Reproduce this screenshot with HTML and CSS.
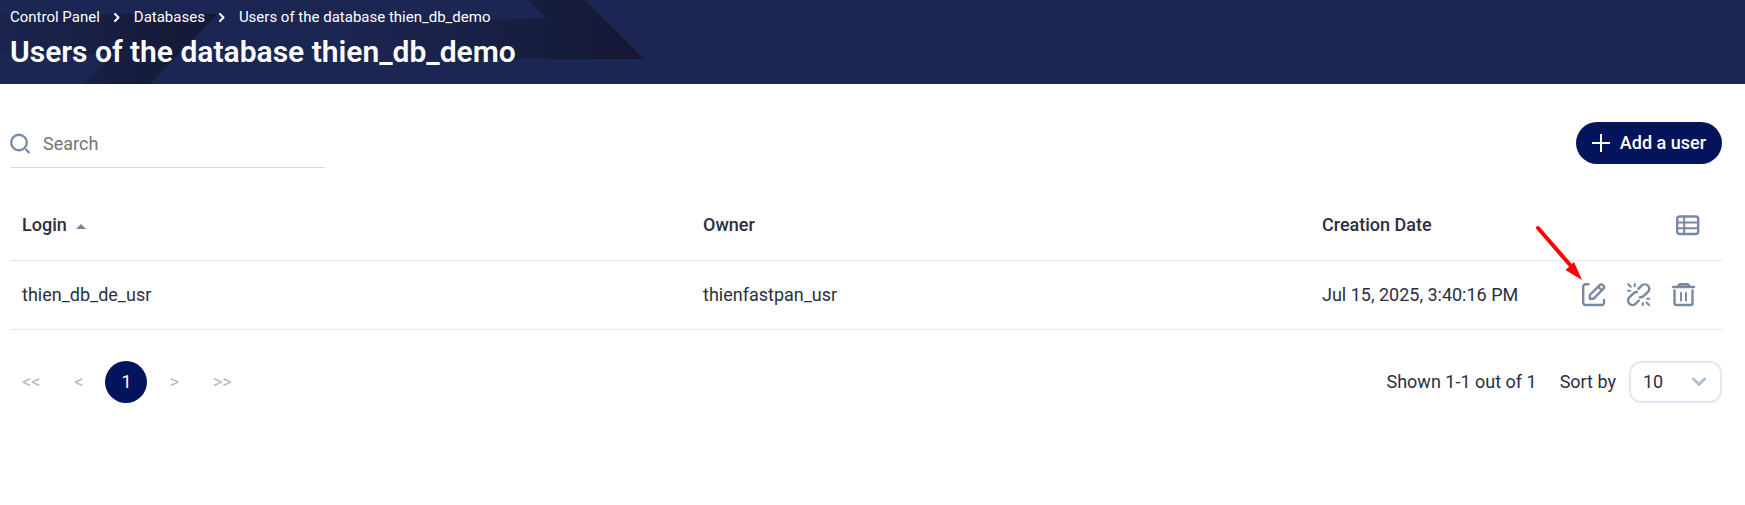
FILE: index.html
```html
<!DOCTYPE html>
<html lang="en">
<head>
<meta charset="utf-8">
<title>Users of the database thien_db_demo</title>
<link rel="stylesheet" href="styles.css">
</head>
<body>
<header class="banner">
  <svg class="banner-art" width="700" height="84" viewBox="0 0 700 84" aria-hidden="true">
    <defs>
      <linearGradient id="fade-left" x1="0" y1="0" x2="217" y2="0" gradientUnits="userSpaceOnUse">
        <stop offset="0" stop-color="#141833" stop-opacity="0.100"/>
        <stop offset="1" stop-color="#141833"/>
      </linearGradient>
      <linearGradient id="fade-right" x1="340" y1="0" x2="644" y2="0" gradientUnits="userSpaceOnUse">
        <stop offset="0" stop-color="#141833" stop-opacity="0"/>
        <stop offset="1" stop-color="#141833"/>
      </linearGradient>
    </defs>
    <path fill="url(#fade-left)" d="M0 14H217L150 84H84L114 54H0Z"/>
    <path fill="url(#fade-right)" d="M528 0H585L644 59H340V19H547Z"/>
  </svg>
  <nav class="crumbs" aria-label="Breadcrumb">
    <a href="#">Control Panel</a>
    <svg class="crumb-sep" width="6" height="9" viewBox="0 0 6 9" aria-hidden="true"><path d="M1 1L4.500 4.500L1 8"/></svg>
    <a href="#">Databases</a>
    <svg class="crumb-sep" width="6" height="9" viewBox="0 0 6 9" aria-hidden="true"><path d="M1 1L4.500 4.500L1 8"/></svg>
    <span>Users of the database thien_db_demo</span>
  </nav>
  <h1 class="title">Users of the database thien_db_demo</h1>
</header>

<main class="content">
  <div class="toolbar">
    <label class="search">
      <svg width="21" height="21" viewBox="0 0 21 21" aria-hidden="true"><circle cx="9" cy="9.500" r="7.800"/><path d="M16 16.500L18.800 19.300"/></svg>
      <input type="search" placeholder="Search" aria-label="Search">
    </label>
    <button class="add" type="button">
      <svg width="18" height="18" viewBox="0 0 18 18" aria-hidden="true"><path d="M9 0V18M0 9H18"/></svg>
      Add a user
    </button>
  </div>

  <table class="users">
    <thead>
      <tr>
        <th class="col-login" scope="col">Login <svg class="sort" width="10" height="5" viewBox="0 0 10 5" aria-hidden="true"><path d="M5 0L10 5H0Z"/></svg></th>
        <th class="col-owner" scope="col">Owner</th>
        <th class="col-date" scope="col">Creation Date</th>
        <th class="col-actions">
          <div class="actions">
            <button class="icon" type="button" aria-label="Choose columns">
              <svg width="24" height="24" viewBox="0 0 24 24"><rect x="1.200" y="3.500" width="21" height="17.500" rx="2.500"/><path class="thin" d="M1.200 9.500H22M1.200 15.200H22M8.200 3.500V21"/></svg>
            </button>
          </div>
        </th>
      </tr>
    </thead>
    <tbody>
      <tr>
        <td>thien_db_de_usr</td>
        <td>thienfastpan_usr</td>
        <td>Jul 15, 2025, 3:40:16 PM</td>
        <td class="col-actions">
          <div class="actions">
            <button class="icon" type="button" aria-label="Edit">
              <svg width="24" height="24" viewBox="0 0 24 24"><path d="M6.500 1.200H3.700A2.500 2.500 0 0 0 1.200 3.700V19.800A2.200 2.200 0 0 0 3.400 22H19.800A2.200 2.200 0 0 0 22 19.800V17"/><path d="M7.800 15.800V12L17.700 2.100A2 2 0 0 1 20.800 2.100L21.500 2.800A2 2 0 0 1 21.500 5.700L11.500 15.800ZM16.500 4L19.500 7"/></svg>
              <svg class="pointer" width="48" height="56" viewBox="0 0 48 56" aria-hidden="true"><path class="pointer-line" d="M3 3L36 41"/><path class="pointer-head" d="M47 55L30.500 45L39 37Z"/></svg>
            </button>
            <button class="icon" type="button" aria-label="Detach">
              <svg width="24" height="24" viewBox="0 0 24 24"><path d="M11.500 5.800L14.600 2.700A4.300 4.300 0 0 1 21 8.900L16 13.500Q14.800 14.500 13 14.200M11.800 17.500L8.700 20.600A4.300 4.300 0 0 1 2.300 14.400L7.300 9.700Q8.500 8.800 10 9"/><path class="thin" d="M1.300 1.300L3.800 3.800M7.700 1V3.200M1 7.700H3.200M22 22L19.500 19.500M15.800 22.300V20M22.300 15.800H20"/></svg>
            </button>
            <button class="icon" type="button" aria-label="Delete">
              <svg width="24" height="24" viewBox="0 0 24 24"><path d="M1.200 4H22M6 3.800Q6.500 1.200 8.500 1.200H15Q17 1.200 17.500 3.800M2.500 7.500V20A2 2 0 0 0 4.500 22H18.500A2 2 0 0 0 20.500 20V7.500"/><path class="thin" d="M9 10V17.500M14 10V17.500"/></svg>
            </button>
          </div>
        </td>
      </tr>
    </tbody>
  </table>

  <footer class="footer">
    <nav class="pages" aria-label="Pages">
      <button type="button" class="page">&lt;&lt;</button>
      <button type="button" class="page">&lt;</button>
      <button type="button" class="page current" aria-current="page">1</button>
      <button type="button" class="page">&gt;</button>
      <button type="button" class="page">&gt;&gt;</button>
    </nav>
    <div class="summary">
      <span>Shown 1-1 out of 1</span>
      <label class="size">Sort by
        <span class="select">
          <select><option>10</option><option>25</option><option>50</option></select>
          <svg width="14" height="10" viewBox="0 0 14 10" aria-hidden="true"><path d="M1.500 2L7 7.500L12.500 2"/></svg>
        </span>
      </label>
    </div>
  </footer>
</main>
</body>
</html>
```
FILE: styles.css
```css
* { box-sizing: border-box; }

body {
  margin: 0;
  background: #fff;
  color: #2a303f;
  font: 18px/24px Roboto, "Liberation Sans", sans-serif;
}

button, input, select {
  padding: 0;
  border: 0;
  background: none;
  color: inherit;
  font: inherit;
}

button { cursor: pointer; }

svg {
  fill: none;
  stroke-linecap: round;
  stroke-linejoin: round;
}

.banner {
  position: relative;
  padding: 6px 10px 12px;
  background: #1c2653;
  color: #fff;
}

.banner-art {
  position: absolute;
  top: 0;
  left: 0;
}

.crumbs {
  position: relative;
  display: flex;
  align-items: center;
  gap: 14px;
  font-size: 15px;
  line-height: 22px;
}

.crumbs a {
  color: inherit;
  text-decoration: none;
}

.crumb-sep {
  stroke: #fff;
  stroke-width: 2;
}

.title {
  position: relative;
  margin: 4px 0 0;
  font-size: 30px;
  font-weight: 600;
  line-height: 40px;
}

.content { padding: 38px 23px 38px 10px; }

.toolbar {
  display: flex;
  justify-content: space-between;
  align-items: flex-start;
}

.search {
  display: flex;
  align-items: center;
  gap: 12px;
  width: 315px;
  height: 46px;
  padding-bottom: 2px;
  border-bottom: 1px solid #cfdfea;
}

.search svg {
  flex: none;
  stroke: #7a8ba8;
  stroke-width: 2.400;
}

.search input {
  flex: 1;
  min-width: 0;
  outline: 0;
}

.search input::placeholder { color: #757575; }

.add {
  display: flex;
  align-items: center;
  gap: 10px;
  height: 42px;
  padding: 0 16px;
  border-radius: 21px;
  background: #03145c;
  color: #fff;
  font-weight: 500;
}

.add svg {
  stroke: #fff;
  stroke-width: 2;
}

.users {
  width: 100%;
  margin-top: 23px;
  border-collapse: collapse;
  table-layout: fixed;
}

.users th, .users td {
  height: 69px;
  padding: 0 12px;
  border-bottom: 1px solid #dfe8f2;
  text-align: left;
}

.users th { font-weight: 500; }

.col-login { width: 681px; }
.col-date { width: 240px; }
.users .col-actions { width: 172px; padding-right: 26px; }
.users th.col-actions { padding-right: 22px; }

.sort {
  margin: 0 0 2px 5px;
  fill: #7a8599;
}

.actions {
  display: flex;
  justify-content: flex-end;
  gap: 21px;
}

.icon {
  position: relative;
  display: flex;
}

.icon svg {
  stroke: #7a88a3;
  stroke-width: 2.400;
}

.icon .thin { stroke-width: 2; }

.icon .pointer {
  position: absolute;
  right: 23px;
  bottom: 26px;
}

.icon .pointer-line {
  stroke: #f00;
  stroke-width: 4;
}

.icon .pointer-head {
  stroke: none;
  fill: #f00;
}

.footer {
  display: flex;
  justify-content: space-between;
  align-items: center;
  padding: 31px 0 0 12px;
}

.pages {
  display: flex;
  align-items: center;
  gap: 34px;
}

.page { color: #b4b9c8; }

.page.current {
  width: 42px;
  height: 42px;
  margin: 0 -12px;
  border-radius: 50%;
  background: #03145c;
  color: #fff;
}

.summary, .size {
  display: flex;
  align-items: center;
}

.summary { gap: 23px; }
.size { gap: 13px; }

.select {
  position: relative;
  display: flex;
}

.select select {
  width: 93px;
  height: 42px;
  padding: 0 12px;
  border: 2px solid #dfe9f4;
  border-radius: 12px;
  appearance: none;
}

.select svg {
  position: absolute;
  top: 16px;
  right: 16px;
  stroke: #b0bdd6;
  stroke-width: 3;
  pointer-events: none;
}
```
